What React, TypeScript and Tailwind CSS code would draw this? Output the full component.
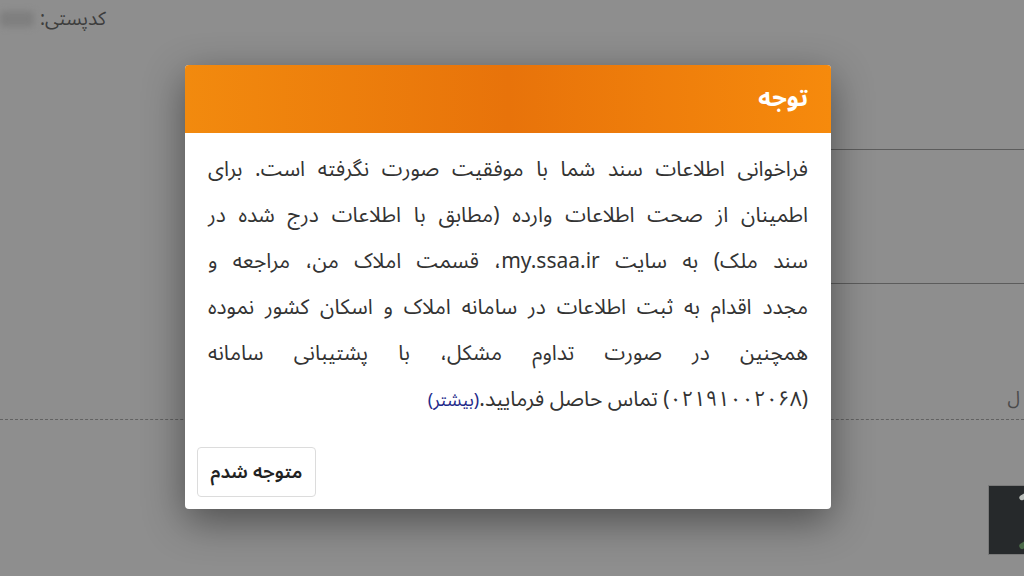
import React from "react";

const lines = [
  "فراخوانی اطلاعات سند شما با موفقیت صورت نگرفته است. برای",
  "اطمینان از صحت اطلاعات وارده (مطابق با اطلاعات درج شده در",
  "سند ملک) به سایت my.ssaa.ir، قسمت املاک من، مراجعه و",
  "مجدد اقدام به ثبت اطلاعات در سامانه املاک و اسکان کشور نموده",
  "همچنین در صورت تداوم مشکل، با پشتیبانی سامانه",
];

const fa = { fontFamily: '"Noto Sans Arabic", Vazirmatn, "DejaVu Sans", sans-serif' };

function BackgroundPage() {
  return (
    <div className="flex flex-col w-full h-full">
      <div className="h-[36px] flex items-center gap-[6px] pt-[2px]">
        <div className="w-[34px] h-[16px] bg-[#7f7f7f] blur-[3px] rounded" />
        <span dir="rtl" className="text-[19px] leading-[28px] text-[#3d3d3d]">کدپستی:</span>
      </div>
      <div className="flex">
        <div className="flex-1" />
        <div className="w-[424px] flex flex-col">
          <div className="h-[114px] border-b border-[#5c5c5c]" />
          <div className="h-[134px] border-b border-[#5c5c5c]" />
          <div className="h-[135px] flex items-end justify-end pb-[12px] pr-[4px]">
            <span className="text-[18px] leading-none text-[#4a4a4a]">ل</span>
          </div>
        </div>
      </div>
      <div className="border-t border-dashed border-[#626262]" />
      <div className="flex justify-end mt-[65px] -mr-[20px]">
        <div className="w-[56px] h-[70px] border border-[#7a7a7a] bg-[#26292b] relative overflow-hidden">
          <div className="absolute right-[14px] top-[8px] w-[10px] h-[5px] rounded-full bg-[#b8bcb8] rotate-[-30deg]" />
          <div className="absolute right-[14px] bottom-[6px] w-[10px] h-[6px] rounded-full bg-[#4a6a48] rotate-[-30deg]" />
        </div>
      </div>
    </div>
  );
}

export default function App() {
  return (
    <div className="relative w-[1024px] h-[576px] overflow-hidden bg-[#8e8e8e]" style={fa}>
      <BackgroundPage />
      <div className="absolute inset-0 flex justify-center items-start pt-[65px] pr-[8px]">
        <div dir="rtl" className="w-[646px] bg-white rounded-[4px] overflow-hidden shadow-[0_12px_40px_rgba(0,0,0,0.45)]">
          <div className="h-[68px] flex items-center px-[23px] bg-linear-to-r from-[#f28a0e] via-[#e8730a] to-[#f68a0c]">
            <h2 className="text-white text-[24px] font-bold">توجه</h2>
          </div>
          <div className="px-[23px] pt-[13px] text-[#333] text-[21px] leading-[46px]">
            {lines.map((l) => (
              <div key={l} className="text-justify [text-align-last:justify] whitespace-nowrap">
                {l}
              </div>
            ))}
            <div className="text-right whitespace-nowrap">
              (۰۲۱۹۱۰۰۲۰۶۸) تماس حاصل فرمایید.
              <a href="#" className="text-[#1f2a8a] text-[18px]">(بیشتر)</a>
            </div>
          </div>
          <div className="flex justify-start px-[12px] pt-[24px] pb-[12px]" dir="ltr">
            <button
              dir="rtl"
              className="w-[119px] h-[50px] border border-[#dcdcdc] rounded-[4px] bg-white text-[19px] font-semibold text-[#222]"
            >
              متوجه شدم
            </button>
          </div>
        </div>
      </div>
    </div>
  );
}
